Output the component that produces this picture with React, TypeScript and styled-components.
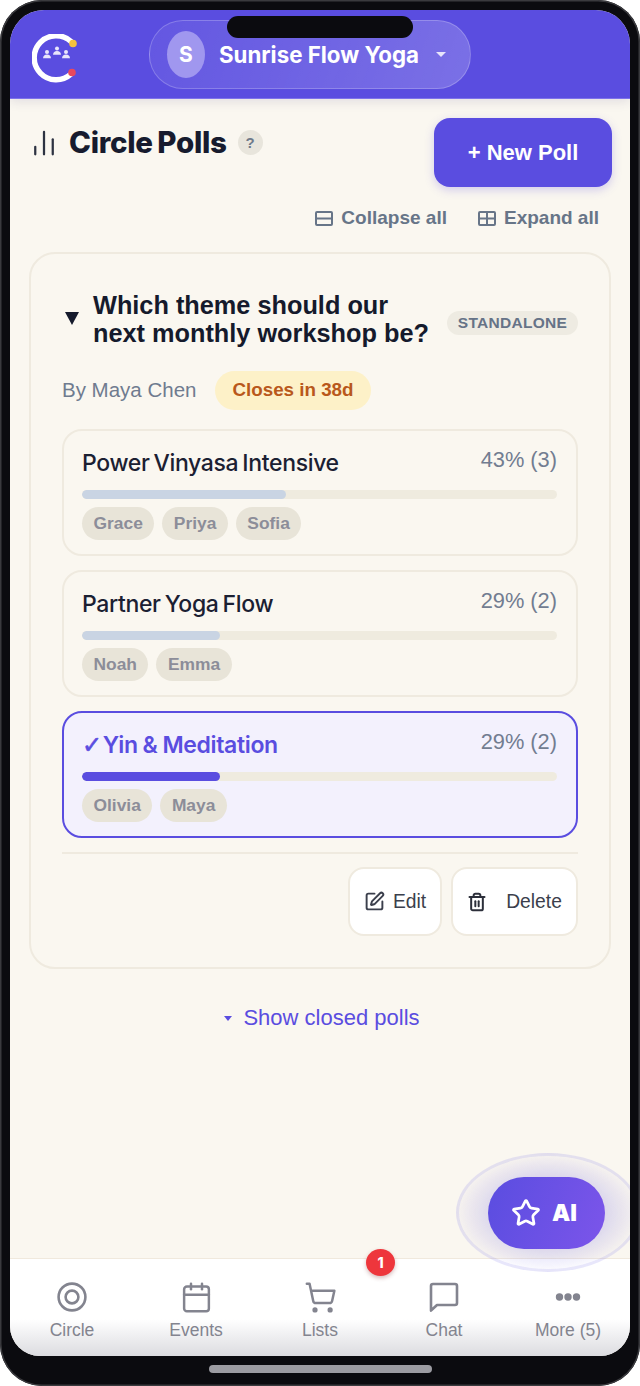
import React from 'react';
import styled, { createGlobalStyle } from 'styled-components';
import { Calendar, ChartNoAxesColumn, ShoppingCart, SquarePen, Star, Trash2 } from 'lucide-react';

const Global = createGlobalStyle`
  html, body { margin: 0; padding: 0; background: #fff; }
  * { box-sizing: border-box; }
  body { font-family: "Liberation Sans", Arial, sans-serif; }
`;
const Phone = styled.div`
  position: relative; width: 640px; height: 1386px; padding: 10px 10px 30px;
  background: #0b0b0f; border-radius: 42px; box-shadow: inset 0 0 0 1.5px #3a3a3e;
`;
const Notch = styled.div`
  position: absolute; left: 227px; top: 16px; width: 186px; height: 22px; border-radius: 11px; background: #0b0b0f; z-index: 5;
`;
const HomeBar = styled.div`
  position: absolute; left: 209px; top: 1365px; width: 223px; height: 8px; border-radius: 4px; background: #9c9ca2;
`;
const Screen = styled.div`
  position: relative; width: 620px; height: 1346px; border-radius: 34px 34px 30px 30px; overflow: hidden;
  display: flex; flex-direction: column; background: #faf7f0;
`;
const Header = styled.header`
  flex: 0 0 89px; display: flex; align-items: center; padding: 0 0 0 22px; background: #5a4de0;
  border-bottom: 1px solid #7d72ea; box-shadow: 0 3px 10px rgba(60,50,120,.12); position: relative; z-index: 2;
`;
const Logo = styled.svg`width: 46px; height: 50px; flex: none; margin-top: 10px;`;
const Workspace = styled.button`
  margin: 0 0 0 71px; width: 322px; height: 69px; padding: 0 0 0 17px; display: flex; align-items: center; border-radius: 34px;
  border: 1.5px solid rgba(255,255,255,.22); background: linear-gradient(110deg, rgba(255,255,255,.06), rgba(255,255,255,.2));
  color: #fff; font: 700 22.3px "Inter", sans-serif;
`;
const Avatar = styled.span`
  width: 38px; height: 47px; border-radius: 50%; background: #a097ef; display: flex; align-items: center; justify-content: center;
  font: 700 21px "Inter", sans-serif; margin-right: 14px; flex: none;
`;
const Caret = styled.span`
  margin-left: 17px; width: 0; height: 0; border-left: 5px solid transparent; border-right: 5px solid transparent; border-top: 5px solid #e8e5fb;
`;
const Content = styled.main`flex: 1; padding: 19px 18px 0 19px; min-height: 0;`;
const TitleRow = styled.div`display: flex; align-items: flex-start; height: 69px;`;
const PollIcon = styled(ChartNoAxesColumn)`width: 30px; height: 30px; color: #2d3342; margin: 10px 0 0 0; flex: none;`;
const Title = styled.h1`
  margin: 6px 0 0 10px; font: 800 29.5px/36px "Inter", sans-serif; letter-spacing: -.3px; word-spacing: -1.5px; color: #171b2e;
`;
const Help = styled.span`
  margin: 12px 0 0 11px; width: 25px; height: 25px; border-radius: 50%; background: #e8e5dc; color: #6f7a8a;
  display: flex; align-items: center; justify-content: center; font: 700 15px "Liberation Sans", sans-serif;
`;
const NewPoll = styled.button`
  margin-left: auto; width: 178px; height: 69px; border: 0; border-radius: 16px; background: #5a4de0; color: #fff;
  font: 700 22px "Liberation Sans", sans-serif; box-shadow: 0 3px 10px rgba(90,77,224,.25);
`;
const LinkRow = styled.div`display: flex; justify-content: flex-end; gap: 31px; padding: 20px 13px 0 0; height: 65px;`;
const TextLink = styled.span`
  display: flex; align-items: center; gap: 8px; height: 22px; font: 700 19px "Liberation Sans", sans-serif; color: #677588;
`;
const Card = styled.section`
  width: 582px; height: 717px; border: 2px solid #efeadf; border-radius: 26px; padding: 31px 31px 0 31px;
`;
const Question = styled.div`display: flex; align-items: center; height: 66px; padding-top: 1px;`;
const Triangle = styled.span`
  width: 0; height: 0; border-left: 7px solid transparent; border-right: 7px solid transparent; border-top: 13px solid #151a2c; margin: 0 14px 0 3px; flex: none;
`;
const QText = styled.h2`
  margin: 0; font: 700 25.3px/28px "Liberation Sans", sans-serif; color: #151a2c; width: 354px; flex: none;
`;
const TypeBadge = styled.span`
  margin-left: auto; width: 131px; height: 24px; border-radius: 12px; background: #eeebe2; color: #667387; display: flex; align-items: center; justify-content: center;
  font: 700 15.5px "Liberation Sans", sans-serif; letter-spacing: .3px; margin-top: 8px;
`;
const Meta = styled.div`display: flex; align-items: center; height: 40px; margin-top: 19px; gap: 19px;`;
const Author = styled.span`font: 400 20.5px "Liberation Sans", sans-serif; color: #6f7b8f;`;
const Closes = styled.span`
  height: 39px; padding: 0 17px; border-radius: 20px; background: #fdf1c8; color: #b9581b; display: flex; align-items: center; font: 700 18.8px "Liberation Sans", sans-serif;
`;
const Options = styled.div`display: flex; flex-direction: column; gap: 14px; margin-top: 19px;`;
const Option = styled.div<{ $picked?: boolean }>`
  height: 127px; padding: 17px 19px 0 18px; border-radius: 20px;
  border: ${p => (p.$picked ? '2px solid #5a4de0' : '2px solid #efeadf')};
  background: ${p => (p.$picked ? '#f3f1fd' : 'transparent')};
`;
const OptionHead = styled.div`display: flex; justify-content: space-between; height: 42px;`;
const OptionName = styled.span<{ $picked?: boolean }>`
  font: ${p => (p.$picked ? 600 : 500)} 23px/30px "Inter", sans-serif; letter-spacing: -.35px; word-spacing: ${p => (p.$picked ? '-.5px' : '-1.7px')};
  color: ${p => (p.$picked ? '#5a4de0' : '#1b2032')};
`;
const CheckMark = styled.span`
  font: 400 24px/0 "DejaVu Sans", sans-serif; margin-right: 1px; -webkit-text-stroke: .6px #5a4de0;
`;
const Percent = styled.span`font: 400 21.8px/24px "Liberation Sans", sans-serif; color: #727d91;`;
const Track = styled.div`height: 9px; border-radius: 5px; background: #efebdf; overflow: hidden;`;
const Fill = styled.div<{ $picked?: boolean }>`
  height: 100%; border-radius: 5px; background: ${p => (p.$picked ? '#5a4de0' : '#c9d4e3')};
`;
const Chips = styled.div`display: flex; gap: 8px; margin-top: 8px;`;
const Chip = styled.span`
  height: 33px; padding: 0 11.5px; border-radius: 17px; background: #e8e4d8; color: #8c8d99; display: flex; align-items: center; font: 700 17.4px "Liberation Sans", sans-serif;
`;
const Actions = styled.div`
  display: flex; justify-content: flex-end; gap: 9px; margin-top: 14px; padding-top: 13px; border-top: 2px solid #efeadf;
`;
const ActionBtn = styled.button<{ $w: number; $gap: number }>`
  width: ${p => p.$w}px; height: 69px; border-radius: 16px; border: 2px solid #efeadf; background: #fff; color: #3b3f4c;
  display: flex; align-items: center; justify-content: center; gap: ${p => p.$gap}px; font: 400 19.3px "Liberation Sans", sans-serif; padding: 0;
`;
const Closed = styled.div`
  display: flex; align-items: center; justify-content: center; gap: 11px; margin-top: 35px; height: 28px; padding-left: 3px; color: #5a4de0; font: 400 22px "Liberation Sans", sans-serif;
`;
const SmallCaret = styled.span`
  width: 0; height: 0; border-left: 4px solid transparent; border-right: 4px solid transparent; border-top: 5px solid #5a4de0;
`;
const TabBar = styled.nav`
  position: relative; flex: 0 0 98px; display: grid; grid-template-columns: repeat(5, 1fr); border-top: 1px solid #f0e9dd;
  background: linear-gradient(180deg, #fff 0, #fff 62%, #dcdce0 100%); padding-top: 21px;
`;
const Tab = styled.div`
  display: flex; flex-direction: column; align-items: center; color: #83848f;
`;
const IconSlot = styled.div`height: 34px; display: flex; align-items: center; justify-content: center;`;
const TabLabel = styled.span`margin-top: 4px; font: 400 17.5px/24px "Liberation Sans", sans-serif; color: #83848f;`;
const Badge = styled.span`
  position: absolute; left: 356px; top: -10px; width: 29px; height: 27px; border-radius: 50%; background: #ee363c; color: #fff;
  display: flex; align-items: center; justify-content: center; font: 800 14px "Inter", sans-serif; box-shadow: 0 2px 4px rgba(120,30,30,.3); z-index: 4;
`;
const Ring = styled.div`
  position: absolute; left: 446px; top: 1143px; width: 184px; height: 119px; border-radius: 50%; border: 3px solid rgba(110,100,225,.13);
  background: radial-gradient(closest-side, rgba(90,77,224,.2) 60%, rgba(90,77,224,.03) 100%); z-index: 3;
`;
const Fab = styled.button`
  position: absolute; left: 478px; top: 1167px; width: 117px; height: 72px; border: 0; border-radius: 36px; z-index: 4;
  background: linear-gradient(110deg, #5a4de0, #7c55ea); color: #fff; display: flex; align-items: center; justify-content: center; gap: 11px;
  font: 900 23px "Inter", sans-serif; padding: 0 5px 0 0;
`;

const Person = ({ x, y }: { x: number; y: number }) => (
  <g fill="#e9e6fb" transform={`translate(${x} ${y})`}>
    <circle cx="0" cy="0" r="2" />
    <path d="M-4 6.2 Q-3.6 2.6 0 2.6 Q3.6 2.6 4 6.2 Z" />
  </g>
);
const CollapseIcon = () => (
  <svg width="18" height="15" viewBox="0 0 18 15" fill="none" stroke="#677588" strokeWidth="2">
    <rect x="1" y="1" width="16" height="13" rx="1" /><path d="M1 7.5h16" />
  </svg>
);
const ExpandIcon = () => (
  <svg width="18" height="15" viewBox="0 0 18 15" fill="none" stroke="#677588" strokeWidth="2">
    <rect x="1" y="1" width="16" height="13" rx="1" /><path d="M1 7.5h16M9 1v13" />
  </svg>
);
const CircleIcon = () => (
  <svg width="30" height="30" viewBox="0 0 30 30" fill="none" stroke="#83848f" strokeWidth="2.6">
    <circle cx="15" cy="15" r="13.4" /><circle cx="15" cy="15" r="6.4" />
  </svg>
);
const ChatIcon = () => (
  <svg width="32" height="32" viewBox="0 0 32 32" fill="none" stroke="#83848f" strokeWidth="2.6" strokeLinejoin="round">
    <path d="M3 29.5V5a2 2 0 0 1 2-2h22a2 2 0 0 1 2 2v17a2 2 0 0 1-2 2H9z" />
  </svg>
);
const DotsIcon = () => (
  <svg width="26" height="10" viewBox="0 0 26 10" fill="#83848f">
    <circle cx="4.5" cy="5" r="3.7" /><circle cx="13" cy="5" r="3.7" /><circle cx="21.5" cy="5" r="3.7" />
  </svg>
);

type Opt = { name: string; pct: number; label: string; voters: string[]; picked?: boolean };
const options: Opt[] = [
  { name: 'Power Vinyasa Intensive', pct: 43, label: '43% (3)', voters: ['Grace', 'Priya', 'Sofia'] },
  { name: 'Partner Yoga Flow', pct: 29, label: '29% (2)', voters: ['Noah', 'Emma'] },
  { name: 'Yin & Meditation', pct: 29, label: '29% (2)', voters: ['Olivia', 'Maya'], picked: true },
];

export default function App() {
  return (
    <Phone>
      <Global />
      <Notch />
      <Screen>
        <Header>
          <Logo viewBox="0 0 46 50" fill="none">
            <path d="M40 7.5 A22 22 0 1 0 40 40" stroke="#fff" strokeWidth="5.5" strokeLinecap="round" transform="translate(-1 0)" />
            <circle cx="41" cy="9.5" r="3.8" fill="#f5c23e" />
            <circle cx="40" cy="38.5" r="3.8" fill="#e8485f" />
            <Person x={15} y={18} /><Person x={25} y={14.5} /><Person x={34} y={18} />
          </Logo>
          <Workspace>
            <Avatar>S</Avatar>
            Sunrise Flow Yoga
            <Caret />
          </Workspace>
        </Header>
        <Content>
          <TitleRow>
            <PollIcon strokeWidth={1.8} />
            <Title>Circle Polls</Title>
            <Help>?</Help>
            <NewPoll>+ New Poll</NewPoll>
          </TitleRow>
          <LinkRow>
            <TextLink><CollapseIcon />Collapse all</TextLink>
            <TextLink><ExpandIcon />Expand all</TextLink>
          </LinkRow>
          <Card>
            <Question>
              <Triangle />
              <QText>Which theme should our next monthly workshop be?</QText>
              <TypeBadge>STANDALONE</TypeBadge>
            </Question>
            <Meta>
              <Author>By Maya Chen</Author>
              <Closes>Closes in 38d</Closes>
            </Meta>
            <Options>
              {options.map(o => (
                <Option key={o.name} $picked={o.picked}>
                  <OptionHead>
                    <OptionName $picked={o.picked}>{o.picked && <CheckMark>✓</CheckMark>}{o.name}</OptionName>
                    <Percent>{o.label}</Percent>
                  </OptionHead>
                  <Track><Fill $picked={o.picked} style={{ width: `${o.pct}%` }} /></Track>
                  <Chips>{o.voters.map(v => <Chip key={v}>{v}</Chip>)}</Chips>
                </Option>
              ))}
            </Options>
            <Actions>
              <ActionBtn $w={94} $gap={8}><SquarePen size={21} strokeWidth={2.2} />Edit</ActionBtn>
              <ActionBtn $w={127} $gap={19}><Trash2 size={20} strokeWidth={2.4} color="#2c2f3a" />Delete</ActionBtn>
            </Actions>
          </Card>
          <Closed><SmallCaret />Show closed polls</Closed>
        </Content>
        <TabBar>
          <Tab><IconSlot><CircleIcon /></IconSlot><TabLabel>Circle</TabLabel></Tab>
          <Tab><IconSlot><Calendar size={33} strokeWidth={1.8} /></IconSlot><TabLabel>Events</TabLabel></Tab>
          <Tab><IconSlot><ShoppingCart size={33} strokeWidth={1.8} /></IconSlot><TabLabel>Lists</TabLabel></Tab>
          <Tab><IconSlot><ChatIcon /></IconSlot><TabLabel>Chat</TabLabel></Tab>
          <Tab><IconSlot><DotsIcon /></IconSlot><TabLabel>More (5)</TabLabel></Tab>
          <Badge>1</Badge>
        </TabBar>
        <Ring />
        <Fab><Star size={30} strokeWidth={2.2} />AI</Fab>
      </Screen>
      <HomeBar />
    </Phone>
  );
}
